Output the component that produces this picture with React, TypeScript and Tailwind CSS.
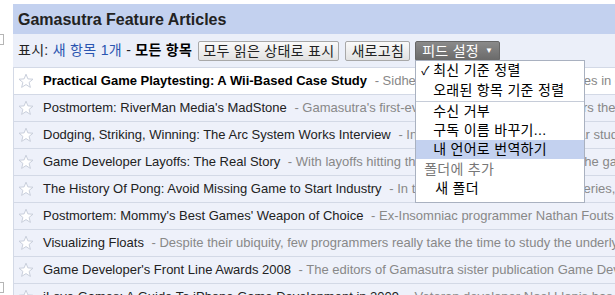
import React from "react";

const KR = "font-['Liberation_Sans','Noto_Sans_CJK_KR',sans-serif]";

type Item = { title: string; snippet: string; bold?: boolean };

const items: Item[] = [
  {
    title: "Practical Game Playtesting: A Wii-Based Case Study",
    snippet: "Sidhe Interactive's team lead outlines in detail",
    bold: true,
  },
  {
    title: "Postmortem: RiverMan Media's MadStone",
    snippet: "Gamasutra's first-ever Wiiware postmortem covers the",
  },
  {
    title: "Dodging, Striking, Winning: The Arc System Works Interview",
    snippet: "In this interview, the Guilty Gear studio talks to",
  },
  {
    title: "Game Developer Layoffs: The Real Story",
    snippet: "With layoffs hitting the industry, what it means for the game in",
  },
  {
    title: "The History Of Pong: Avoid Missing Game to Start Industry",
    snippet: "In this installment of our newer series,",
  },
  {
    title: "Postmortem: Mommy's Best Games' Weapon of Choice",
    snippet: "Ex-Insomniac programmer Nathan Fouts explains",
  },
  {
    title: "Visualizing Floats",
    snippet: "Despite their ubiquity, few programmers really take the time to study the underlying",
  },
  {
    title: "Game Developer's Front Line Awards 2008",
    snippet: "The editors of Gamasutra sister publication Game Developer",
  },
  {
    title: "iLove Games: A Guide To iPhone Game Development in 2009",
    snippet: "Veteran developer Noel Llopis has decided about the",
  },
];

function Star() {
  return (
    <svg width="16" height="16" viewBox="0 0 16 16" className="shrink-0">
      <path
        d="M8 1.2 L9.9 5.9 L15 6.2 L11.1 9.4 L12.4 14.4 L8 11.6 L3.6 14.4 L4.9 9.4 L1 6.2 L6.1 5.9 Z"
        fill="#ffffff"
        stroke="#c9cfdc"
        strokeWidth="1"
        strokeLinejoin="round"
      />
    </svg>
  );
}

function SettingsMenu() {
  return (
    <div className="absolute left-0 top-[19px] w-[170px] bg-white border border-[#a9b1c0] z-10 text-[14px] text-black pb-[4px] whitespace-nowrap">
      <div className="h-[20px] flex items-center pl-[5px]">
        <span className="w-[12px] text-[12px]">✓</span>
        <span>최신 기준 정렬</span>
      </div>
      <div className="h-[20px] flex items-center pl-[17px]">오래된 항목 기준 정렬</div>
      <div className="border-t border-[#c6ccd8]" />
      <div className="h-[19px] flex items-center pl-[17px]">수신 거부</div>
      <div className="h-[19px] flex items-center pl-[17px]">구독 이름 바꾸기...</div>
      <div className="h-[19px] flex items-center pl-[17px] bg-[#c3d1ef]">내 언어로 번역하기</div>
      <div className="h-[21px] flex items-end pl-[8px] text-[#777]">폴더에 추가</div>
      <div className="h-[18px] flex items-center pl-[19px]">새 폴더</div>
    </div>
  );
}

export default function App() {
  return (
    <div className={`w-[615px] h-[295px] overflow-hidden flex bg-white ${KR}`}>
      <div className="w-[13px] shrink-0 flex flex-col">
        <div className="mt-[34px] h-[11px] w-[4px] border border-l-0 border-[#b5b5b5]" />
        <div className="mt-[237px] h-[11px] w-[4px] border border-l-0 border-[#b5b5b5]" />
      </div>
      <div className="flex-1 min-w-0 flex flex-col">
        <div className="mt-[4px] h-[30px] shrink-0 bg-[#c3d1ef] flex items-center pl-[5px] pt-[1px]">
          <h1 className="text-[16px] font-bold text-[#222] whitespace-nowrap">Gamasutra Feature Articles</h1>
        </div>
        <div className="h-[33px] shrink-0 bg-[#ebeff9] flex items-center pl-[5px] text-[14px] tracking-[0.3px] whitespace-nowrap">
          <span className="text-[#222]">표시:&nbsp;</span>
          <span className="text-[#2a55b0]">새 항목 1개</span>
          <span className="text-[#222]">&nbsp;-&nbsp;</span>
          <span className="font-bold text-black">모든 항목</span>
          <button className="ml-[6px] h-[20px] px-[4px] border border-[#a8a8a8] rounded-[2px] bg-gradient-to-b from-[#fafafa] to-[#e2e2e2] text-[#222] text-[14px] tracking-[0.3px] leading-none">
            모두 읽은 상태로 표시
          </button>
          <button className="ml-[6px] h-[20px] px-[5px] border border-[#a8a8a8] rounded-[2px] bg-gradient-to-b from-[#fafafa] to-[#e2e2e2] text-[#222] text-[14px] tracking-[0.3px] leading-none">
            새로고침
          </button>
          <div className="relative ml-[5px]">
            <button className="h-[20px] px-[6px] border border-[#666] rounded-[2px] bg-gradient-to-b from-[#8a8a8a] to-[#6a6a6a] text-white text-[14px] leading-none flex items-center gap-[6px]">
              피드 설정
              <span className="text-[8px]">▼</span>
            </button>
            <SettingsMenu />
          </div>
        </div>
        <div className="flex-1 border-t border-l border-[#d3d9e6] font-['Liberation_Sans',sans-serif] text-[13px]">
          {items.map((it, i) => (
            <div
              key={i}
              className={`h-[27px] flex items-center gap-[9px] pl-[4px] border-b border-[#d3d9e6] whitespace-nowrap overflow-hidden ${
                i === 0 ? "bg-white" : "bg-[#eef1fa]"
              }`}
            >
              <Star />
              <span className={`${it.bold ? "font-bold text-black" : "text-[#222]"}`}>{it.title}</span>
              <span className="text-[#888] -ml-[5px]">&nbsp;- {it.snippet}</span>
            </div>
          ))}
        </div>
      </div>
    </div>
  );
}
